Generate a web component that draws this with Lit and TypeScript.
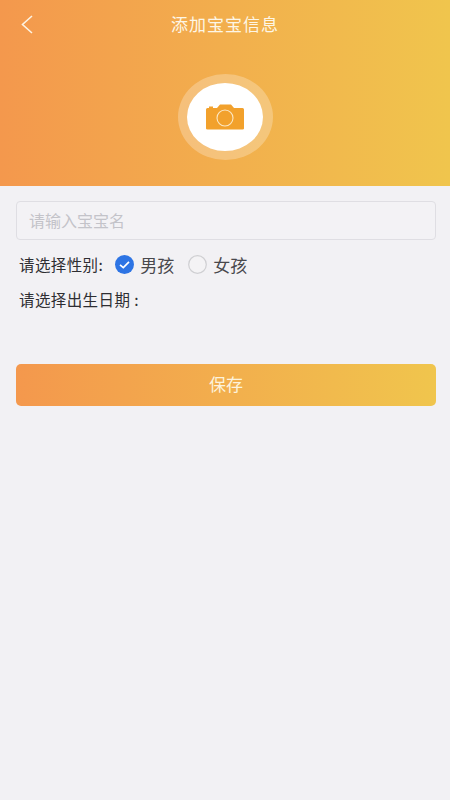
import { LitElement, html, css } from "lit";
import { customElement } from "lit/decorators.js";

@customElement("app-root")
export class AppRoot extends LitElement {
  static styles = css`
    :host {
      display: block;
      width: 450px;
      height: 800px;
      background: #f2f1f4;
      font-family: "Noto Sans CJK SC", "Noto Sans", sans-serif;
      overflow: hidden;
    }
    .head {
      height: 186px;
      background: linear-gradient(90deg, #f4984d, #f0c54d);
      display: flex;
      flex-direction: column;
      align-items: center;
      position: relative;
    }
    .back {
      position: absolute;
      left: 20px;
      top: 14px;
      width: 14px;
      height: 21px;
    }
    .title {
      margin-top: 12px;
      height: 24px;
      line-height: 24px;
      font-size: 17px;
      letter-spacing: 1px;
      color: #fdf6e6;
    }
    .ring {
      margin-top: 38px;
      width: 95px;
      height: 86px;
      border-radius: 50%;
      background: rgba(255, 255, 255, 0.26);
      display: flex;
      align-items: center;
      justify-content: center;
    }
    .disc {
      width: 76px;
      height: 68px;
      border-radius: 50%;
      background: #fff;
      display: flex;
      align-items: center;
      justify-content: center;
    }
    .cam { width: 38px; height: 26px; display: block; }
    .form {
      padding: 15px 14px 0 16px;
      display: flex;
      flex-direction: column;
    }
    .input {
      height: 35px;
      border: 1px solid #dfdee3;
      border-radius: 4px;
      background: #f3f2f5;
      padding: 0 0 2px 12px;
      display: flex;
      align-items: center;
      font-size: 16px;
      color: #c3c3c9;
    }
    .gender {
      margin-top: 12px;
      padding-left: 3px;
      height: 24px;
      display: flex;
      align-items: center;
      font-size: 15.5px;
      letter-spacing: 0.4px;
      color: #2e2e32;
    }
    .radio { width: 19px; height: 19px; display: block; flex: none; }
    .r1 { margin-left: 12px; }
    .r2 { margin-left: 14px; }
    .opt { margin-left: 6px; font-size: 17px; color: #48484c; letter-spacing: 0; }
    .date {
      margin-top: 11px;
      padding-left: 3px;
      height: 24px;
      line-height: 24px;
      font-size: 15.5px;
      letter-spacing: 0.4px;
      color: #2e2e32;
    }
    .save {
      margin-top: 53px;
      height: 42px;
      border-radius: 5px;
      background: linear-gradient(90deg, #f4984d, #f0c54d);
      display: flex;
      align-items: center;
      justify-content: center;
      font-size: 17px;
      padding-bottom: 4px;
      box-sizing: border-box;
      color: #fdf3dc;
    }
  `;

  render() {
    return html`
      <div class="head">
        <svg class="back" viewBox="0 0 14 21" fill="none">
          <path d="M12 2 L2.5 10.5 L12 19" stroke="#fdf3e2" stroke-width="1.6" />
        </svg>
        <div class="title">添加宝宝信息</div>
        <div class="ring">
          <div class="disc">
            <svg class="cam" viewBox="0 0 38 26">
              <path
                fill="#f2a12c"
                fill-rule="evenodd"
                d="M1.5 4 H3 V2.5 H7 V4 H11 L14 0.5 H25 L28 4 H36.5 Q38 4 38 5.5 V24.5 Q38 25.5 36.5 25.5 H1.5 Q0 25.5 0 24.5 V5.5 Q0 4 1.5 4 Z"
              />
              <circle cx="19" cy="14" r="8" fill="none" stroke="#fbe7c4" stroke-width="1.1" />
            </svg>
          </div>
        </div>
      </div>
      <div class="form">
        <div class="input">请输入宝宝名</div>
        <div class="gender">
          <span>请选择性别:</span>
          <svg class="radio r1" viewBox="0 0 19 19">
            <circle cx="9.5" cy="9.5" r="9.5" fill="#2d74e4" />
            <path d="M5 9.8 L8.3 12.6 L14 6.8" fill="none" stroke="#fff" stroke-width="1.7" />
          </svg>
          <span class="opt">男孩</span>
          <svg class="radio r2" viewBox="0 0 19 19">
            <circle cx="9.5" cy="9.5" r="8.8" fill="#f4f3f5" stroke="#cfcfd2" stroke-width="1.2" />
          </svg>
          <span class="opt">女孩</span>
        </div>
        <div class="date">请选择出生日期 :</div>
        <div class="save">保存</div>
      </div>
    `;
  }
}
